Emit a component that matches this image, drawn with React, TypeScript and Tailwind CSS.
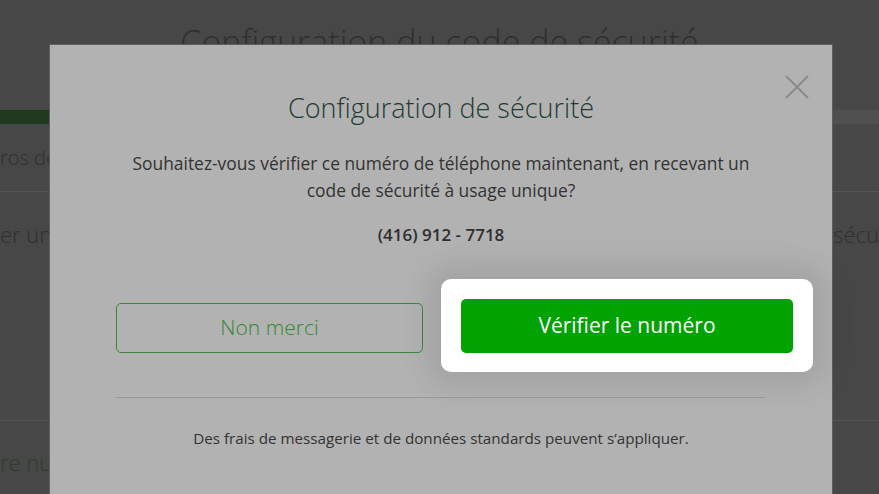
import React from "react";

export default function App() {
  const font = { fontFamily: '"Open Sans", "Noto Sans", sans-serif' };
  return (
    <div
      className="relative w-[879px] h-[494px] overflow-hidden bg-[#474747]"
      style={font}
    >
      {/* Background page (dimmed) */}
      <div className="flex flex-col w-full">
        <div className="pt-[18px] h-[110px] text-center text-[34px] leading-[48px] font-light text-[#2f2f2f] whitespace-nowrap">
          Configuration du code de sécurité
        </div>
        <div className="flex h-[14px] w-full">
          <div className="w-[520px] bg-[#1f3a1f]" />
          <div className="flex-1 bg-[#505050]" />
        </div>
        <div className="h-[68px] border-b border-[#555] flex items-center">
          <span className="text-[20px] text-[#2f2f2f] font-light whitespace-nowrap">
            ros de
          </span>
        </div>
        <div className="flex justify-between h-[80px] items-start pt-[26px]">
          <span className="text-[22px] text-[#2f2f2f] font-light whitespace-nowrap">
            er un
          </span>
          <span className="text-[22px] text-[#2f2f2f] font-light whitespace-nowrap">
            sécu
          </span>
        </div>
        <div className="h-[149px] border-b border-[#555]" />
        <div className="pt-[25px]">
          <span className="text-[22px] text-[#2a3f2a] font-light whitespace-nowrap">
            re num
          </span>
        </div>
      </div>

      {/* Modal */}
      <div className="absolute left-[49px] top-[44px] w-[784px] h-[470px] bg-[#b2b2b2] border-x border-t border-[#5e5e5e]">
        <button className="absolute left-[734px] top-[29px] w-[26px] h-[26px]">
          <svg width="26" height="26" viewBox="0 0 26 26">
            <path
              d="M2 2 L24 24 M24 2 L2 24"
              stroke="#8a8a8a"
              strokeWidth="2"
              fill="none"
            />
          </svg>
        </button>

        <div className="flex flex-col items-stretch pt-[47px]">
          <div className="h-[32px] leading-[32px] text-center text-[27px] font-light text-[#243a33] whitespace-nowrap">
            Configuration de sécurité
          </div>
          <div className="mt-[26px] text-center text-[17.4px] leading-[27px] text-[#333] whitespace-nowrap">
            Souhaitez-vous vérifier ce numéro de téléphone maintenant, en recevant un
            <br />
            code de sécurité à usage unique?
          </div>
          <div className="mt-[19px] text-center text-[17px] leading-[24px] font-semibold text-[#2e2e2e]">
            (416) 912 - 7718
          </div>

          <div className="mt-[32px] flex items-start pl-[66px]">
            <div className="mt-[24px] w-[307px] h-[50px] rounded-[5px] border border-[#3a893a] flex items-center justify-center text-[21px] font-light text-[#348734]">
              Non merci
            </div>
            <div className="ml-[18px] w-[372px] h-[93px] p-[20px] pb-[19px] bg-white rounded-[10px] shadow-[0_0_30px_14px_rgba(0,0,0,0.09)]">
              <div className="w-[332px] h-[54px] rounded-[5px] bg-[#00a300] flex items-center justify-center text-[21px] text-white">
                Vérifier le numéro
              </div>
            </div>
          </div>

          <div className="mt-[25px] ml-[66px] w-[649px] h-px bg-[#979797]" />

          <div className="mt-[30px] text-center text-[15.2px] leading-[20px] text-[#333] whitespace-nowrap">
            Des frais de messagerie et de données standards peuvent s’appliquer.
          </div>
        </div>
      </div>
    </div>
  );
}
